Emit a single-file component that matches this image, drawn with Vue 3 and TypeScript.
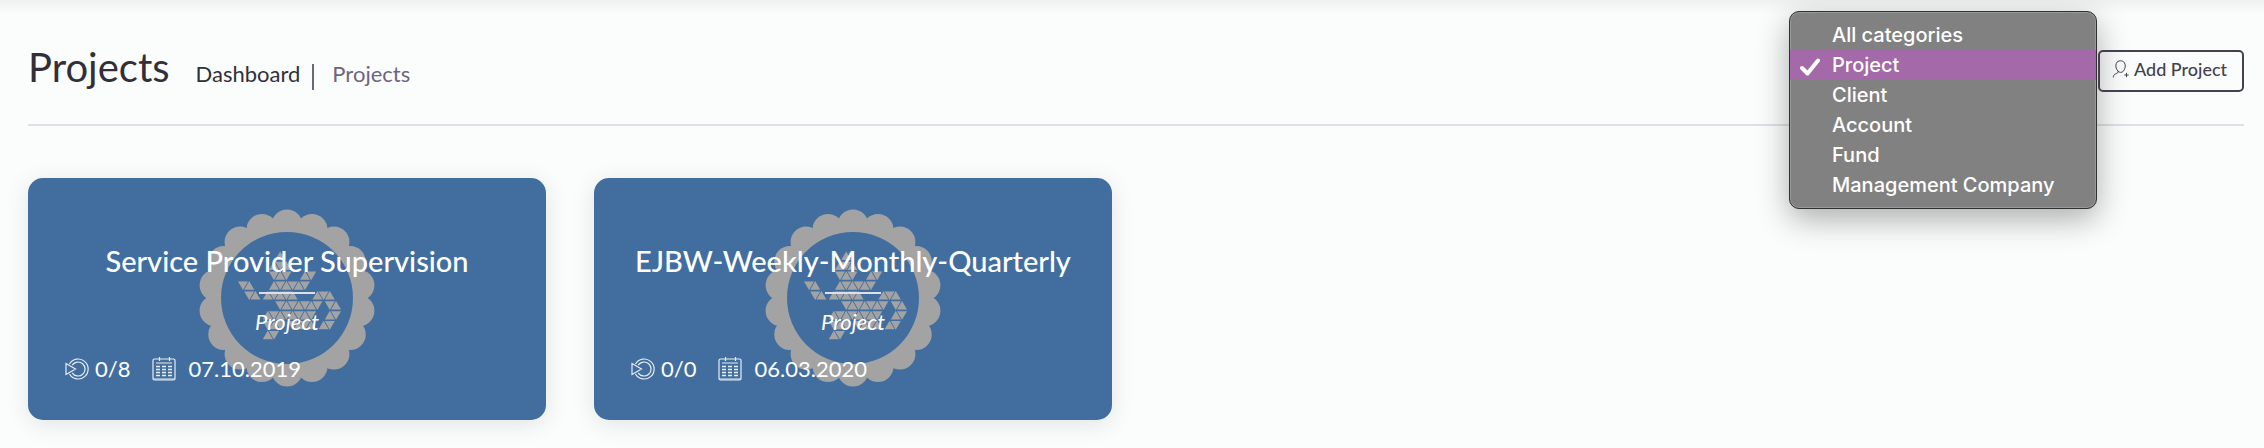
<script setup lang="ts">
import { ref } from 'vue'

interface Project {
  name: string
  kind: string
  progress: string
  date: string
}

const categories: string[] = ['All categories', 'Project', 'Client', 'Account', 'Fund', 'Management Company']
const category = ref<string>('Project')

const projects: Project[] = [
  { name: 'Service Provider Supervision', kind: 'Project', progress: '0/8', date: '07.10.2019' },
  { name: 'EJBW-Weekly-Monthly-Quarterly', kind: 'Project', progress: '0/0', date: '06.03.2020' },
]

// Scalloped rim of the seal: 18 lobes around the ring
const lobes = Array.from({ length: 18 }, (_, i) => {
  const a = (i * 20 * Math.PI) / 180
  return { x: 73 * Math.sin(a), y: -73 * Math.cos(a) }
})

// Columns filled in each row of the triangle mosaic
const mosaic: number[][] = [
  [6],
  [5, 6, 7],
  [5, 6, 7, 10, 11],
  [0, 1, 5, 6, 7, 8, 9, 10],
  [1, 2, 4, 5, 6, 7, 8, 12, 13, 14],
  [6, 7, 8, 9, 10, 11, 12, 14, 15],
  [4, 5, 6, 7, 8, 9, 10, 11, 14, 15],
  [4, 5, 6, 8, 9, 10, 11, 13, 14],
  [4, 5],
]

const mosaicPath = mosaic
  .flatMap((cols, row) =>
    cols.map((col) => {
      const x = -44 + col * 6.2
      const top = -47 + row * 9.9
      const up = (row + col) % 2 === 0
      return up
        ? `M${x} ${top + 0.4}L${x + 5} ${top + 9}H${x - 5}Z`
        : `M${x} ${top + 9.4}L${x + 5} ${top + 0.8}H${x - 5}Z`
    }),
  )
  .join('')
</script>

<template>
  <div class="page">
    <header class="header">
      <div class="heading">
        <h1>Projects</h1>
        <nav aria-label="Breadcrumb">
          <ol class="crumbs">
            <li><a href="#dashboard">Dashboard</a></li>
            <li class="current" aria-current="page">Projects</li>
          </ol>
        </nav>
      </div>
      <div class="actions">
        <div class="category">
          <div class="menu">
            <select v-model="category" size="6" aria-label="Category">
              <option v-for="c in categories" :key="c" :value="c">{{ c }}</option>
            </select>
            <svg class="check" viewBox="0 0 20 18" aria-hidden="true">
              <path d="M2 10 L7.5 15.5 L18 2.5" />
            </svg>
          </div>
        </div>
        <button type="button" class="add">
          <svg viewBox="0 0 18 20" aria-hidden="true">
            <path d="M6 12.2 C3.6 9.6 3.4 6.5 4.4 4.2 C5.6 1.2 10.8 1 12.5 3.8 C14 6.6 13.2 10 11.3 12.2 C9.8 13.8 7.6 13.8 6 12.2 C6.8 13.6 5.4 14 3.6 14.8 C2 15.6 1.4 16.6 1.3 18.5 M14.5 13.8V18.2 M12.3 16H16.7" />
          </svg>
          <span>Add Project</span>
        </button>
      </div>
    </header>

    <main class="grid">
      <article v-for="p in projects" :key="p.name" class="card">
        <svg class="seal" viewBox="-90 -90 180 180" aria-hidden="true">
          <circle v-for="(l, i) in lobes" :key="i" :cx="l.x" :cy="l.y" r="15.5" fill="#a3a3a3" />
          <circle r="70" fill="#a3a3a3" />
          <circle r="66" fill="#426e9f" />
          <path :d="mosaicPath" fill="#a3a3a3" />
        </svg>
        <div class="body">
          <h2>{{ p.name }}</h2>
          <hr />
          <p class="kind">{{ p.kind }}</p>
          <div class="meta">
            <svg viewBox="0 0 24 24" aria-hidden="true">
              <path d="M4.5 7 A10 10 0 1 1 4.5 17 M7.2 8.2 A7 7 0 1 1 7.2 15.8 M1 6.5 V17.5 L10.5 12 Z" />
            </svg>
            <span class="progress">{{ p.progress }}</span>
            <svg viewBox="0 0 24 24" aria-hidden="true">
              <rect x="1" y="2" width="22" height="21" rx="1.5" />
              <path d="M7.5 0V4 M17.5 0V4 M4 6H20 M1 22H23" />
              <path class="cells" d="M4 9.5H20 M4 12.5H20 M4 15.5H20 M4 18.5H20" />
            </svg>
            <time class="date">{{ p.date }}</time>
          </div>
        </div>
      </article>
    </main>
  </div>
</template>

<style>
body {
  margin: 0;
  background: #fbfdfc;
}
</style>

<style scoped>
.page {
  box-sizing: border-box;
  min-height: 100vh;
  padding: 50px 20px 20px 28px;
  background: linear-gradient(#eff1f0, #fbfdfc 14px);
  color: #322f38;
  font-family: Lato, "Open Sans", sans-serif;
}

.header {
  display: flex;
  justify-content: space-between;
  align-items: flex-start;
  padding-bottom: 32px;
  border-bottom: 2px solid #dfe0e7;
}

.heading {
  display: flex;
  align-items: baseline;
  gap: 26px;
}

h1 {
  margin: 0;
  font-size: 40px;
  font-weight: 400;
  line-height: 34px;
}

.crumbs {
  display: flex;
  gap: 12px;
  margin: 0;
  padding: 0;
  list-style: none;
  font-size: 22px;
  line-height: 20px;
}

.crumbs a {
  color: inherit;
  text-decoration: none;
}

.current {
  padding: 0 0 6px 18px;
  border-left: 2px solid #6d6580;
  color: #6d6580;
}

.actions {
  display: flex;
  gap: 1px;
}

.category {
  position: relative;
  width: 308px;
}

.menu {
  position: absolute;
  top: -39px;
  left: 0;
  box-sizing: border-box;
  width: 100%;
  padding: 8px 0;
  border: 1px solid #303030;
  border-radius: 10px;
  background: #828182;
  box-shadow: inset 0 0 0 1px #9a999a, 0 10px 32px rgba(0, 0, 0, 0.32);
}

select {
  display: block;
  box-sizing: border-box;
  width: 100%;
  height: 180px;
  padding: 0;
  border: 0;
  outline: 0;
  background: transparent;
  color: #fff;
  font: 500 20px/30px Inter, sans-serif;
  overflow: hidden;
}

option {
  box-sizing: border-box;
  height: 30px;
  min-height: 30px;
  padding: 3px 0 0 42px;
  color: #fff;
  font-weight: 500;
}

option:checked {
  background: linear-gradient(#a469a8, #a469a8);
  color: #fff;
  -webkit-text-fill-color: #fff;
}

.check {
  position: absolute;
  top: 46px;
  left: 10px;
  width: 20px;
  height: 18px;
  fill: none;
  stroke: #fff;
  stroke-width: 4;
  stroke-linecap: round;
  stroke-linejoin: round;
  pointer-events: none;
}

.add {
  display: flex;
  align-items: center;
  gap: 4px;
  height: 42px;
  padding: 0 12px 4px;
  border: 2px solid #453f50;
  border-radius: 5px;
  background: transparent;
  color: #453f50;
  font: 500 18px/24px Lato, "Open Sans", sans-serif;
  position: relative;
  min-width: 146px;
}

.add svg {
  width: 18px;
  height: 20px;
  fill: none;
  stroke: #453f50;
  stroke-width: 1;
}

.grid {
  display: grid;
  grid-template-columns: repeat(4, 1fr);
  gap: 48px;
  padding-top: 52px;
}

.card {
  position: relative;
  box-sizing: border-box;
  min-height: 242px;
  padding: 65px 37px 36px;
  border-radius: 15px;
  background: #426e9f;
  box-shadow: 0 4px 24px rgba(0, 0, 0, 0.1);
  color: #fff;
}

.seal {
  position: absolute;
  top: 30px;
  left: 50%;
  width: 180px;
  height: 180px;
  margin-left: -90px;
}

.body {
  position: relative;
}

h2 {
  margin: 0;
  font-size: 29px;
  font-weight: 500;
  line-height: 36px;
  text-align: center;
  white-space: nowrap;
}

hr {
  width: 56px;
  height: 2px;
  margin: 13px auto 16px;
  border: 0;
  background: #dfe0e7;
}

.kind {
  margin: 0 0 23px;
  font-size: 22px;
  font-style: italic;
  font-weight: 400;
  line-height: 24px;
  text-align: center;
}

.meta {
  display: flex;
  align-items: center;
  font-size: 22px;
  line-height: 24px;
}

.meta svg {
  width: 24px;
  height: 24px;
  fill: none;
  stroke: #e6edf4;
  stroke-width: 1.2;
}

.meta .cells {
  stroke-width: 1.5;
  stroke-dasharray: 4 2;
}

.progress {
  margin: 0 22px 0 6px;
}

.date {
  margin-left: 12px;
}
</style>
